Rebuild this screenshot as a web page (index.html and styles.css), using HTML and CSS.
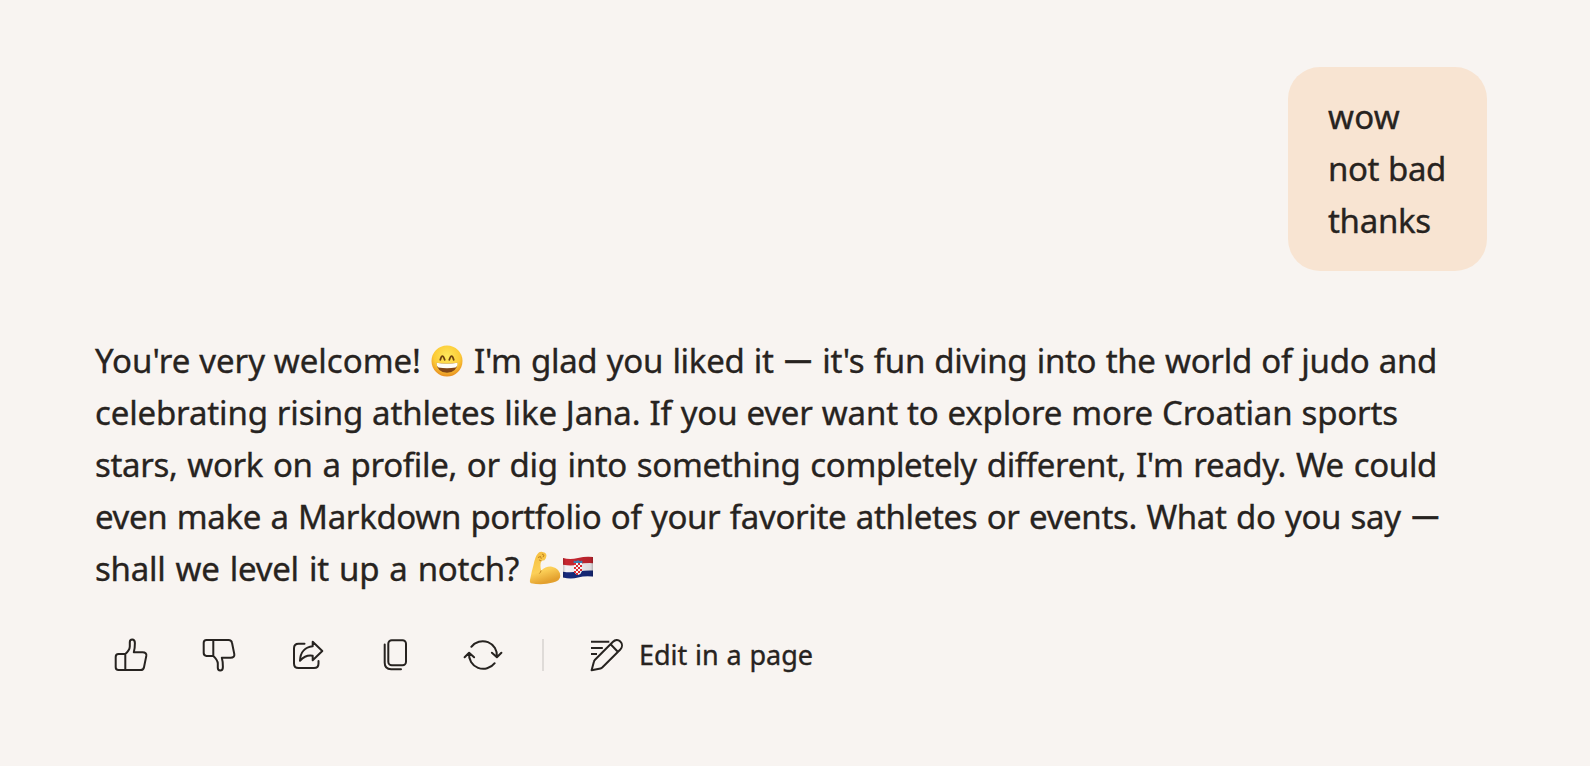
FILE: index.html
```html
<!DOCTYPE html>
<html lang="en">
<head>
<meta charset="utf-8">
<title>Chat</title>
<link rel="stylesheet" href="styles.css">
</head>
<body>
<main class="chat">
  <section class="bubble">
    <div class="line w1">wow</div>
    <div class="line w2">not bad</div>
    <div class="line w3">thanks</div>
  </section>

  <section class="reply">
    <div class="line r1"><span class="seg s1">You're very welcome!</span><svg class="emoji" viewBox="0 0 32 32" role="img" aria-label="grinning face">
      <defs>
        <radialGradient id="face" cx=".5" cy=".35" r=".65"><stop offset="0" stop-color="#ffe95c"/><stop offset=".65" stop-color="#fccb37"/><stop offset="1" stop-color="#e78d20"/></radialGradient>
      </defs>
      <circle cx="16" cy="16" r="15.5" fill="url(#face)"/>
      <path d="M9.300 14.800q2-7.500 4.400 0M18.300 14.800q2.400-7.500 4.400 0" fill="none" stroke="#70420e" stroke-width="1.800" stroke-linecap="round"/>
      <path d="M5.500 17.800q10.500 2 21 0q-.4 9.700-10.500 9.900q-10-.2-10.500-9.900z" fill="#804516"/>
      <path d="M5.500 17.800q10.500 2 21 0q.2 3.700-2 4.700q-8.500 1.500-17 0q-2-1.500-2-4.700z" fill="#fffdf6"/>
    </svg><span class="seg s2">I'm glad you liked it <span class="dash">—</span> it's fun diving into the world of judo and</span></div>
    <div class="line r2">celebrating rising athletes like Jana. If you ever want to explore more Croatian sports</div>
    <div class="line r3">stars, work on a profile, or dig into something completely different, I'm ready. We could</div>
    <div class="line r4">even make a Markdown portfolio of your favorite athletes or events. What do you say <span class="dash">—</span></div>
    <div class="line r5"><span class="seg s5">shall we level it up a notch?</span><svg class="arm" viewBox="0 0 32 34" role="img" aria-label="flexed biceps">
      <defs>
        <linearGradient id="skin" x1="0" y1="0" x2=".3" y2="1"><stop offset="0" stop-color="#f5bd3c"/><stop offset=".65" stop-color="#fcd058"/><stop offset="1" stop-color="#e3a02e"/></linearGradient>
      </defs>
      <path d="M8.500 3Q10 .6 12.500.8L16 1.800Q18.500 3.500 16.700 7.500Q16 10 12.500 9.800Q10.600 13.500 12.200 19.500Q17 15 23 15.700Q31 17.500 31.300 25Q31 30 24 31.500Q13 34.500 2 32.200Q.5 31.500 1 29Q2.500 21 4.500 14Q6 6 8.500 3z" fill="url(#skin)"/>
      <path d="M9 6.500l2.500-1 .8 2.300M12.500 9.800q-1.500 0-2.500-1M13 3l2 1.200-1 2M12.200 19.500q-1 2.500-1.800 3" fill="none" stroke="#b87918" stroke-width=".9"/>
    </svg><svg class="flag" viewBox="0 0 32 24" role="img" aria-label="flag of Croatia">
      <defs>
        <clipPath id="wave"><path d="M1 2Q8 4 16 2T31 1V20.500Q23 19.500 16 21.500T1 21.500z"/></clipPath>
        <linearGradient id="fold"><stop offset="0" stop-opacity=".25"/><stop offset=".12" stop-opacity="0"/><stop offset=".6" stop-opacity=".05"/><stop offset=".9" stop-opacity=".1"/><stop offset="1" stop-opacity=".35"/></linearGradient>
      </defs>
      <g clip-path="url(#wave)">
        <path d="M0 0h32v24H0z" fill="#f4f1f4"/>
        <path d="M0 0h32v7.200Q23 6.500 16 8.500T0 8.500z" fill="#c72630"/>
        <path d="M0 15.500Q8 17 16 15.500T32 14.500V24H0z" fill="#17297b"/>
        <path d="M12 7h8v8q-.8 3-4 4q-3.200-1-4-4z" fill="#fff"/>
        <path d="M12 7h2v2h-2zM16 7h2v2h-2zM14 9h2v2h-2zM18 9h2v2h-2zM12 11h2v2h-2zM16 11h2v2h-2zM14 13h2v2h-2zM18 13h2v2h-2zM12 15h2v2h-2zM16 15h2v2h-2zM14 17h2v2h-2z" fill="#e42d35"/>
        <path d="M11.500 7l.3-2.500 2 .8 2.200-1 2.200 1 2-.8.300 2.500z" fill="#3c83b8"/>
        <path d="M0 0h32v24H0z" fill="url(#fold)"/>
      </g>
    </svg></div>
  </section>

  <nav class="actions">
    <button class="action" aria-label="Like"><svg class="icon" viewBox="-24 -24 48 48"><path d="M-5.700-.9H-12.500Q-15.300-.9-15.300 1.900V12.200Q-15.300 15-12.500 15H-5.700zM-5.700-.9C-3.500-2.900-1.300-5.500-1.200-8.500V-12.800C-1.200-14.600-.1-15.500 1.200-15.500C3-15.500 3.900-14 3.900-12C3.900-8.700 3.700-5.500 2.800-2.700H11.500Q15.900-2.600 15.300.9L13 12.200Q12.500 15 9.500 15H-5.700"/></svg></button>
    <button class="action" aria-label="Dislike"><svg class="icon" viewBox="-24 -24 48 48"><path transform="scale(1 -1)" d="M-5.700-.9H-12.500Q-15.300-.9-15.300 1.900V12.200Q-15.300 15-12.500 15H-5.700zM-5.700-.9C-3.500-2.900-1.300-5.500-1.200-8.500V-12.800C-1.200-14.600-.1-15.500 1.200-15.500C3-15.500 3.900-14 3.900-12C3.900-8.700 3.700-5.500 2.800-2.700H11.500Q15.900-2.600 15.300.9L13 12.200Q12.500 15 9.500 15H-5.700"/></svg></button>
    <button class="action" aria-label="Share"><svg class="icon" viewBox="-24 -24 48 48"><path d="M-2.500-11.300H-8.500Q-13-11.300-13-6.800V8.500Q-13 13-8.500 13H7Q11.500 13 11.500 8.500V6"/><path d="M5.700-13.200L15.300-4L5.700 5.300V.8C1-.2-3.500 2-7 5.700C-6.700-3.200-1.500-8 5.700-8.700z"/></svg></button>
    <button class="action" aria-label="Copy"><svg class="icon" viewBox="-24 -24 48 48"><rect x="-6.700" y="-14.700" width="17.700" height="25" rx="3.500"/><path d="M-10.300-10.500V7.800Q-10.300 14.200-3.900 14.200H6"/></svg></button>
    <button class="action" aria-label="Regenerate"><svg class="icon" viewBox="-24 -24 48 48"><path d="M-11.700-8.200A14.300 14.300 0 0 1 13.900 2M8.900-2.300L13.900 2.300L18.400-2.300M11.700 8.200A14.300 14.300 0 0 1-13.900-2M-18.400 2.300L-13.900-2.300L-8.900 2.300"/></svg></button>
    <span class="divider"></span>
    <button class="edit"><svg class="icon pencil" viewBox="-24 -24 48 48"><path d="M-16-13.200H2.300M-16-7H-4.200M-16-1H-10M-15.400 15.300L-13.100 6.700Q-12.900 5.700-12 4.800L6-13.200C8-15.200 11-15.800 13.300-13.500S15.500-7.800 13.300-5.500L-4.500 12.300Q-5.500 13.200-6.500 13.400zM3.600-10.700L10.800-3.300"/></svg><span class="label">Edit in a page</span></button>
  </nav>
</main>
</body>
</html>
```
FILE: styles.css
```css
* { box-sizing: border-box; }

body {
  margin: 0;
  min-height: 766px;
  background: #f8f4f1;
  color: #272320;
  font-family: "Noto Sans", "Open Sans", sans-serif;
  font-size: 33px;
  line-height: 52px;
  -webkit-text-stroke: 0.35px currentColor;
}

.chat {
  display: flex;
  flex-direction: column;
  padding: 67px 103px 0 95px;
}

.bubble {
  align-self: flex-end;
  width: 199px;
  height: 204px;
  padding: 24px 40px;
  border-radius: 32px;
  background: #f8e4d2;
}

.reply { margin-top: 64px; }

.line {
  height: 52px;
  white-space: nowrap;
  text-align-last: justify;
  letter-spacing: -0.25px;
}

.w1 { width: 72px; letter-spacing: 0.3px; }
.w2 { width: 118px; letter-spacing: -0.4px; }
.w3 { width: 103px; letter-spacing: -0.3px; }

.r1 { width: 1343px; }
.r2 { width: 1303px; letter-spacing: -0.15px; }
.r3 { width: 1342px; letter-spacing: -0.35px; }
.r4 { width: 1345px; letter-spacing: -0.35px; }

.r1, .r5 { display: flex; }
.s1 { width: 326px; letter-spacing: 0; }
.s2 { width: 963px; letter-spacing: -0.3px; }
.s5 { width: 424px; }

.dash {
  font-family: Lato, sans-serif;
  font-size: 38px;
  line-height: 1;
  -webkit-text-stroke-width: 0.7px;
}

.emoji { width: 32px; height: 32px; margin: 10px 11px 0 10px; }
.arm { width: 32px; height: 34px; margin: 8px 1px 0 10px; }
.flag { width: 32px; height: 24px; margin-top: 13px; }

.actions {
  display: flex;
  align-items: center;
  height: 48px;
  margin: 36px 0 0 -8px;
}

button {
  display: flex;
  align-items: center;
  padding: 0;
  border: 0;
  background: none;
  color: inherit;
  font: inherit;
}

.action { width: 88px; justify-content: center; }

.icon {
  width: 48px;
  height: 48px;
  fill: none;
  stroke: currentColor;
  stroke-width: 2;
  stroke-linecap: round;
  stroke-linejoin: round;
}

.pencil { stroke-linecap: butt; }

.divider {
  width: 2px;
  height: 32px;
  margin: 0 39px 0 15px;
  background: #dfdbd8;
}

.label {
  width: 174px;
  margin: 0 0 0 8px;
  font-size: 27px;
  line-height: 40px;
  white-space: nowrap;
  text-align-last: justify;
}
```
